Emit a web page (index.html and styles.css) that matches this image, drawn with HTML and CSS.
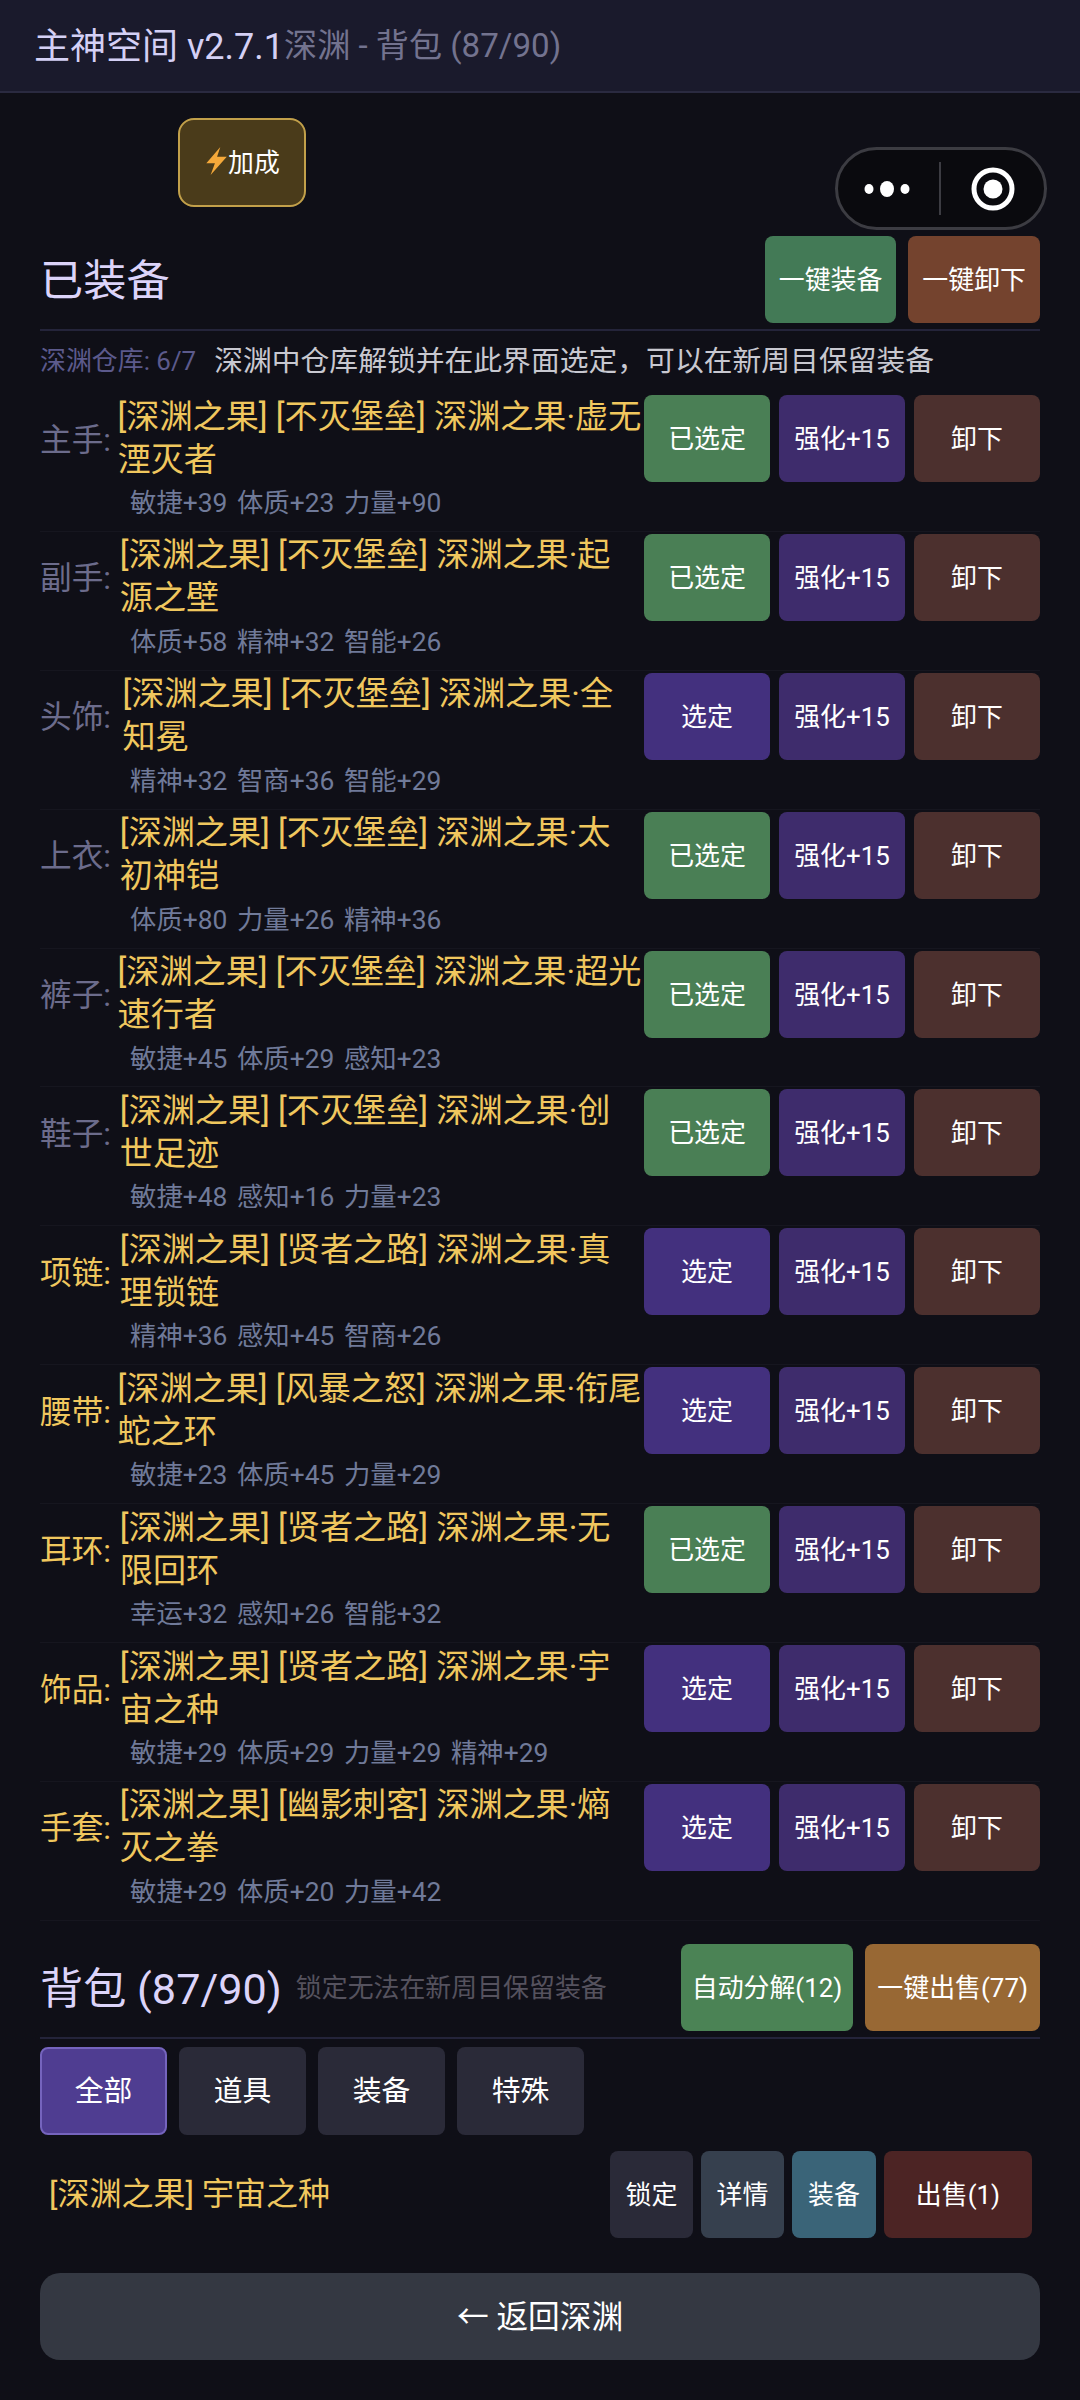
FILE: index.html
```html
<!DOCTYPE html>
<html lang="zh-CN">
<head>
    <meta charset="UTF-8">
    <meta name="viewport" content="width=device-width, initial-scale=1.0">
    <title>主神空间</title>
    <link rel="stylesheet" href="styles.css">
</head>
<body>
    <header class="topbar">
        <span class="app-title">主神空间 v2.7.1</span>
        <span class="page-title">深渊 - 背包 (87/90)</span>
    </header>

    <div class="capsule">
        <svg class="capsule-dots" width="46" height="20" viewBox="0 0 46 20"><ellipse cx="5" cy="10" rx="4.5" ry="5" fill="#fff"/><ellipse cx="23" cy="10" rx="7" ry="8" fill="#fff"/><ellipse cx="41" cy="10" rx="4.5" ry="5" fill="#fff"/></svg>
        <span class="capsule-line"></span>
        <svg class="capsule-target" width="44" height="44" viewBox="0 0 44 44"><circle cx="22" cy="22" r="19" fill="none" stroke="#fff" stroke-width="5"/><circle cx="22" cy="22" r="9.5" fill="#fff"/></svg>
    </div>

    <main class="page">
        <div class="buff-row">
            <button class="btn btn-buff"><svg width="24" height="28" viewBox="0 0 22 26"><path d="M15 0 L2 15 L10 15 L6 26 L21 9 L12 9 Z" fill="#f5a93a"/></svg>加成</button>
        </div>

        <div class="section-head">
            <h2>已装备</h2>
            <div class="head-actions">
                <button class="btn btn-head btn-equip-all">一键装备</button>
                <button class="btn btn-head btn-unequip-all">一键卸下</button>
            </div>
        </div>

        <div class="vault-tip">
            <span class="vault-count">深渊仓库: 6/7</span>
            <span class="vault-text">深渊中仓库解锁并在此界面选定，可以在新周目保留装备</span>
        </div>

        <div class="gear-row">
            <div class="gear-main">
                <span class="slot">主手:</span>
                <span class="gear-name">[深渊之果] [不灭堡垒] 深渊之果·虚无湮灭者</span>
                <div class="gear-actions">
                    <button class="btn btn-picked">已选定</button>
                    <button class="btn btn-boost">强化+15</button>
                    <button class="btn btn-off">卸下</button>
                </div>
            </div>
            <div class="gear-stats">敏捷+39 体质+23 力量+90</div>
        </div>

        <div class="gear-row">
            <div class="gear-main">
                <span class="slot">副手:</span>
                <span class="gear-name">[深渊之果] [不灭堡垒] 深渊之果·起源之壁</span>
                <div class="gear-actions">
                    <button class="btn btn-picked">已选定</button>
                    <button class="btn btn-boost">强化+15</button>
                    <button class="btn btn-off">卸下</button>
                </div>
            </div>
            <div class="gear-stats">体质+58 精神+32 智能+26</div>
        </div>

        <div class="gear-row">
            <div class="gear-main">
                <span class="slot">头饰:</span>
                <span class="gear-name">[深渊之果] [不灭堡垒] 深渊之果·全知冕</span>
                <div class="gear-actions">
                    <button class="btn btn-pick">选定</button>
                    <button class="btn btn-boost">强化+15</button>
                    <button class="btn btn-off">卸下</button>
                </div>
            </div>
            <div class="gear-stats">精神+32 智商+36 智能+29</div>
        </div>

        <div class="gear-row">
            <div class="gear-main">
                <span class="slot">上衣:</span>
                <span class="gear-name">[深渊之果] [不灭堡垒] 深渊之果·太初神铠</span>
                <div class="gear-actions">
                    <button class="btn btn-picked">已选定</button>
                    <button class="btn btn-boost">强化+15</button>
                    <button class="btn btn-off">卸下</button>
                </div>
            </div>
            <div class="gear-stats">体质+80 力量+26 精神+36</div>
        </div>

        <div class="gear-row">
            <div class="gear-main">
                <span class="slot">裤子:</span>
                <span class="gear-name">[深渊之果] [不灭堡垒] 深渊之果·超光速行者</span>
                <div class="gear-actions">
                    <button class="btn btn-picked">已选定</button>
                    <button class="btn btn-boost">强化+15</button>
                    <button class="btn btn-off">卸下</button>
                </div>
            </div>
            <div class="gear-stats">敏捷+45 体质+29 感知+23</div>
        </div>

        <div class="gear-row">
            <div class="gear-main">
                <span class="slot">鞋子:</span>
                <span class="gear-name">[深渊之果] [不灭堡垒] 深渊之果·创世足迹</span>
                <div class="gear-actions">
                    <button class="btn btn-picked">已选定</button>
                    <button class="btn btn-boost">强化+15</button>
                    <button class="btn btn-off">卸下</button>
                </div>
            </div>
            <div class="gear-stats">敏捷+48 感知+16 力量+23</div>
        </div>

        <div class="gear-row">
            <div class="gear-main">
                <span class="slot slot-gold">项链:</span>
                <span class="gear-name">[深渊之果] [贤者之路] 深渊之果·真理锁链</span>
                <div class="gear-actions">
                    <button class="btn btn-pick">选定</button>
                    <button class="btn btn-boost">强化+15</button>
                    <button class="btn btn-off">卸下</button>
                </div>
            </div>
            <div class="gear-stats">精神+36 感知+45 智商+26</div>
        </div>

        <div class="gear-row">
            <div class="gear-main">
                <span class="slot slot-gold">腰带:</span>
                <span class="gear-name">[深渊之果] [风暴之怒] 深渊之果·衔尾蛇之环</span>
                <div class="gear-actions">
                    <button class="btn btn-pick">选定</button>
                    <button class="btn btn-boost">强化+15</button>
                    <button class="btn btn-off">卸下</button>
                </div>
            </div>
            <div class="gear-stats">敏捷+23 体质+45 力量+29</div>
        </div>

        <div class="gear-row">
            <div class="gear-main">
                <span class="slot slot-gold">耳环:</span>
                <span class="gear-name">[深渊之果] [贤者之路] 深渊之果·无限回环</span>
                <div class="gear-actions">
                    <button class="btn btn-picked">已选定</button>
                    <button class="btn btn-boost">强化+15</button>
                    <button class="btn btn-off">卸下</button>
                </div>
            </div>
            <div class="gear-stats">幸运+32 感知+26 智能+32</div>
        </div>

        <div class="gear-row">
            <div class="gear-main">
                <span class="slot slot-gold">饰品:</span>
                <span class="gear-name">[深渊之果] [贤者之路] 深渊之果·宇宙之种</span>
                <div class="gear-actions">
                    <button class="btn btn-pick">选定</button>
                    <button class="btn btn-boost">强化+15</button>
                    <button class="btn btn-off">卸下</button>
                </div>
            </div>
            <div class="gear-stats">敏捷+29 体质+29 力量+29 精神+29</div>
        </div>

        <div class="gear-row">
            <div class="gear-main">
                <span class="slot slot-gold">手套:</span>
                <span class="gear-name">[深渊之果] [幽影刺客] 深渊之果·熵灭之拳</span>
                <div class="gear-actions">
                    <button class="btn btn-pick">选定</button>
                    <button class="btn btn-boost">强化+15</button>
                    <button class="btn btn-off">卸下</button>
                </div>
            </div>
            <div class="gear-stats">敏捷+29 体质+20 力量+42</div>
        </div>

        <div class="section-head section-bag">
            <div class="bag-title">
                <h2>背包 (87/90)</h2>
                <span class="bag-note">锁定无法在新周目保留装备</span>
            </div>
            <div class="head-actions">
                <button class="btn btn-head btn-salvage">自动分解(12)</button>
                <button class="btn btn-head btn-sell-all">一键出售(77)</button>
            </div>
        </div>

        <div class="tabs">
            <button class="btn tab tab-active">全部</button>
            <button class="btn tab">道具</button>
            <button class="btn tab">装备</button>
            <button class="btn tab">特殊</button>
        </div>

        <div class="bag-item">
            <span class="bag-name">[深渊之果] 宇宙之种</span>
            <div class="bag-actions">
                <button class="btn btn-lock">锁定</button>
                <button class="btn btn-detail">详情</button>
                <button class="btn btn-wear">装备</button>
                <button class="btn btn-sell">出售(1)</button>
            </div>
        </div>

        <button class="btn btn-back">← 返回深渊</button>
    </main>
</body>
</html>
```

FILE: styles.css
```css
/* Basic reset */
* {
    box-sizing: border-box;
    margin: 0;
    padding: 0;
    font-family: Roboto, "Noto Sans CJK SC", sans-serif;
}

body {
    position: relative;
    width: 1080px;
    height: 2400px;
    overflow: hidden;
    background-color: #0f0f17;
}

.topbar {
    display: flex;
    align-items: center;
    height: 93px;
    padding: 0 0 5px 34px;
    background-color: #1a1a2c;
    border-bottom: 2px solid #2a2a40;
}

.app-title {
    font-size: 36px;
    color: #d4d0f5;
    white-space: nowrap;
}

.page-title {
    font-size: 33.12px;
    color: #73738f;
    white-space: nowrap;
}

/* wechat capsule sits over the page */
.capsule {
    position: absolute;
    top: 147px;
    left: 835px;
    width: 212px;
    height: 83px;
    display: flex;
    align-items: center;
    background-color: #0a0a0e;
    border: 3px solid #3c3c42;
    border-radius: 42px;
}

.capsule-dots {
    margin-left: 26px;
}

.capsule-line {
    width: 2px;
    height: 53px;
    margin-left: 29px;
    background-color: #3c3c42;
}

.capsule-target {
    margin-left: 30px;
}

.page {
    padding: 25px 40px 0;
}

.btn {
    display: flex;
    align-items: center;
    justify-content: center;
    padding-bottom: 4px;
    border: none;
    border-radius: 8px;
    font-size: 25.92px;
    color: #fff;
    white-space: nowrap;
}

.buff-row {
    padding-left: 138px;
}

.btn-buff {
    width: 128px;
    height: 89px;
    background-color: #4a3b1a;
    border: 2px solid #c2a04a;
    border-radius: 16px;
}

.section-head {
    display: flex;
    align-items: center;
    justify-content: space-between;
    margin-top: 29px;
    padding-bottom: 6px;
    border-bottom: 2px solid #24243a;
}

h2 {
    padding-bottom: 5px;
    font-size: 43.2px;
    font-weight: 400;
    color: #dcd4fa;
    white-space: nowrap;
}

.head-actions {
    display: flex;
    gap: 12px;
}

.btn-head {
    height: 87px;
    padding: 0 14px 4px;
}

.btn-equip-all {
    background-color: #437a56;
}

.btn-unequip-all {
    background-color: #74432e;
}

.vault-tip {
    display: flex;
    align-items: center;
    gap: 18px;
    height: 56px;
    margin-top: 1px;
    margin-bottom: 5px;
    padding-bottom: 3px;
}

.vault-count {
    font-size: 25.92px;
    color: #5c5a8c;
    white-space: nowrap;
}

.vault-text {
    font-size: 28.8px;
    color: #c8c8d0;
    white-space: nowrap;
}

.gear-row {
    height: 138.9px;
    padding-top: 2px;
    padding-bottom: 6px;
    border-bottom: 1px solid #16161f;
}

.gear-main {
    display: flex;
    align-items: center;
    height: 87px;
}

.slot {
    flex: 0 1 86px;
    min-width: 0;
    padding-bottom: 4px;
    font-size: 31.68px;
    color: #6c6c8c;
    white-space: nowrap;
}

.slot-gold {
    color: #f0c75e;
}

.gear-name {
    flex: 1 1.6 auto;
    min-width: 0;
    padding: 0 1.5px 2px 0;
    font-size: 33.12px;
    line-height: 43px;
    color: #f0c75e;
}

.gear-actions {
    flex: none;
    display: flex;
    gap: 9px;
}

.gear-actions .btn {
    width: 126px;
    height: 87px;
}

.btn-picked {
    background-color: #4a7f55;
}

.btn-pick {
    background-color: #43307e;
}

.btn-boost {
    background-color: #3e2c6c;
}

.btn-off {
    background-color: #4c302e;
}

.gear-stats {
    padding-left: 90px;
    font-size: 26.4px;
    line-height: 42px;
    word-spacing: 3px;
    color: #707a99;
    white-space: nowrap;
}

.section-bag {
    margin-top: 23px;
}

.section-bag .btn-head {
    padding: 0 11px 4px;
}

.section-bag .btn-sell-all {
    padding: 0 12px 4px;
}

.bag-title {
    display: flex;
    align-items: center;
    gap: 14px;
}

.bag-note {
    padding-bottom: 3px;
    font-size: 25.92px;
    color: #55525e;
    white-space: nowrap;
}

.btn-salvage {
    background-color: #4b8355;
}

.btn-sell-all {
    background-color: #986834;
}

.tabs {
    display: flex;
    gap: 12px;
    margin-top: 8px;
}

.tab {
    width: 127px;
    height: 88px;
    font-size: 28.8px;
    background-color: #2a2a38;
}

.tab-active {
    background-color: #4f3d91;
    border: 2px solid #7564bd;
}

.bag-item {
    display: flex;
    align-items: center;
    justify-content: space-between;
    margin-top: 16px;
    padding: 0 8px 0 9px;
}

.bag-name {
    padding-bottom: 6px;
    font-size: 32px;
    color: #f0c75e;
}

.bag-actions {
    display: flex;
    gap: 8px;
}

.bag-actions .btn {
    height: 87px;
}

.btn-lock {
    width: 83px;
    background-color: #2a2a38;
}

.btn-detail {
    width: 83px;
    background-color: #36404e;
}

.btn-wear {
    width: 84px;
    background-color: #3a6478;
}

.btn-sell {
    width: 148px;
    background-color: #4c2424;
}

.btn-back {
    width: 1000px;
    height: 87px;
    margin-top: 35px;
    font-size: 31.68px;
    background-color: #343842;
    border-radius: 20px;
}
```
